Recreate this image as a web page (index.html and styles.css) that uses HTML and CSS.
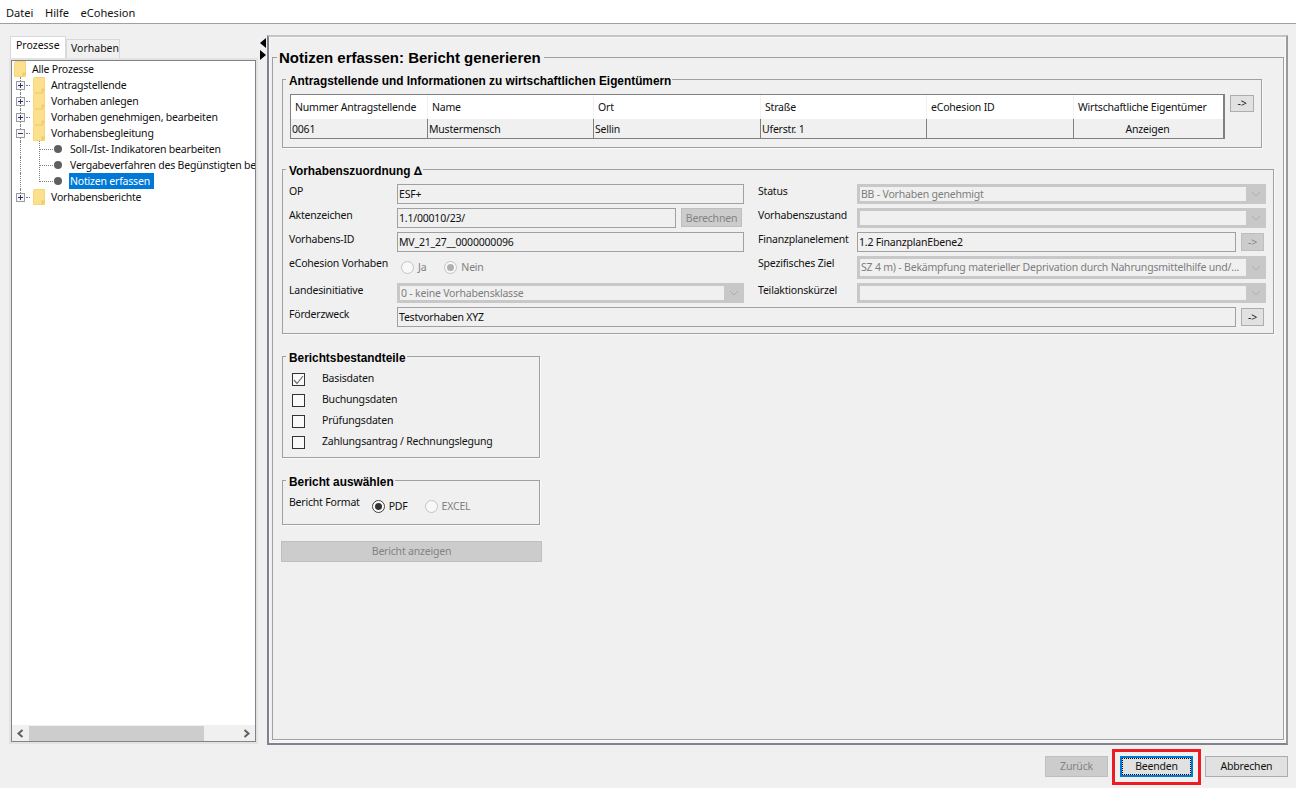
FILE: index.html
```html
<!DOCTYPE html>
<html lang="de">
  <head>
    <meta charset="UTF-8" />
    <title>eCohesion</title>
    <link rel="stylesheet" href="styles.css">
  </head>
  <body>
    <svg class="defs" width="0" height="0">
      <symbol id="folder" viewBox="0 0 12 16">
        <path d="M0.500 1.500Q0.500 0.500 1.500 0.500H11.500V15.500H0.500Z" fill="#fce08e" stroke="#f7d678"/>
        <path d="M11.500 11.500V13.500L9 15.500H8.500V11.500Z" fill="#f3cb62"/>
      </symbol>
      <symbol id="chev" viewBox="0 0 10 6">
        <path d="M1 1L5 5L9 1" fill="none" stroke="#aeaeae"/>
      </symbol>
    </svg>

    <nav class="menubar">
      <span>Datei</span>
      <span>Hilfe</span>
      <span>eCohesion</span>
    </nav>

    <div class="workspace">
      <!-- linke Seite: Baum -->
      <aside class="side">
        <div class="tabs">
          <span class="tab active">Prozesse</span>
          <span class="tab">Vorhaben</span>
        </div>
        <div class="tree-box">
          <ul class="tree">
            <li class="root"><svg class="folder"><use href="#folder"/></svg>Alle Prozesse</li>
            <li class="lvl1"><i class="toggle plus"></i><svg class="folder"><use href="#folder"/></svg>Antragstellende</li>
            <li class="lvl1"><i class="toggle plus"></i><svg class="folder"><use href="#folder"/></svg>Vorhaben anlegen</li>
            <li class="lvl1"><i class="toggle plus"></i><svg class="folder"><use href="#folder"/></svg>Vorhaben genehmigen, bearbeiten</li>
            <li class="lvl1"><i class="toggle"></i><svg class="folder"><use href="#folder"/></svg>Vorhabensbegleitung</li>
            <li class="lvl2"><b class="dot"></b><span>Soll-/Ist- Indikatoren bearbeiten</span></li>
            <li class="lvl2"><b class="dot"></b><span>Vergabeverfahren des Begünstigten bearbeiten</span></li>
            <li class="lvl2"><b class="dot"></b><span class="selected">Notizen erfassen</span></li>
            <li class="lvl1 last"><i class="toggle plus"></i><svg class="folder"><use href="#folder"/></svg>Vorhabensberichte</li>
          </ul>
          <div class="hscroll">
            <svg width="9" height="9" viewBox="0 0 9 9"><path d="M6.500 1L2.500 4.500L6.500 8" fill="none" stroke="#606060" stroke-width="2"/></svg>
            <div class="hscroll-track"><div class="hscroll-thumb"></div></div>
            <svg width="9" height="9" viewBox="0 0 9 9"><path d="M2.500 1L6.500 4.500L2.500 8" fill="none" stroke="#606060" stroke-width="2"/></svg>
          </div>
        </div>
      </aside>

      <div class="splitter">
        <span class="arrow-left"></span>
        <span class="arrow-right"></span>
      </div>

      <!-- rechte Seite: Formular -->
      <main class="main">
        <fieldset class="group page">
          <legend class="title">Notizen erfassen: Bericht generieren</legend>

          <fieldset class="group owners">
            <legend>Antragstellende und Informationen zu wirtschaftlichen Eigentümern</legend>
            <div class="owners-row">
              <table class="grid">
                <colgroup>
                  <col class="c1"><col class="c2"><col class="c3"><col class="c4"><col class="c5"><col class="c6">
                </colgroup>
                <thead>
                  <tr><th>Nummer Antragstellende</th><th>Name</th><th>Ort</th><th>Straße</th><th>eCohesion ID</th><th>Wirtschaftliche Eigentümer</th></tr>
                </thead>
                <tbody>
                  <tr><td>0061</td><td>Mustermensch</td><td>Sellin</td><td>Uferstr. 1</td><td></td><td class="center">Anzeigen</td></tr>
                </tbody>
              </table>
              <button class="btn arrow">-&gt;</button>
            </div>
          </fieldset>

          <fieldset class="group assign">
            <legend>Vorhabenszuordnung <span class="delta">∆</span></legend>
            <div class="assign-grid">
              <label>OP</label>
              <div class="field">ESF+</div>
              <label>Status</label>
              <div class="combo"><span>BB - Vorhaben genehmigt</span><svg><use href="#chev"/></svg></div>

              <label>Aktenzeichen</label>
              <div class="with-btn"><div class="field">1.1/00010/23/</div><button class="btn off calc">Berechnen</button></div>
              <label>Vorhabenszustand</label>
              <div class="combo"><span></span><svg><use href="#chev"/></svg></div>

              <label>Vorhabens-ID</label>
              <div class="field">MV_21_27__0000000096</div>
              <label>Finanzplanelement</label>
              <div class="with-btn"><div class="field">1.2 FinanzplanEbene2</div><button class="btn off arrow">-&gt;</button></div>

              <label>eCohesion Vorhaben</label>
              <div class="radios muted">
                <span class="radio"><i class="circle"></i>Ja</span>
                <span class="radio"><i class="circle on"></i>Nein</span>
              </div>
              <label>Spezifisches Ziel</label>
              <div class="combo tall"><span>SZ 4 m) - Bekämpfung materieller Deprivation durch Nahrungsmittelhilfe und/...</span><svg><use href="#chev"/></svg></div>

              <label>Landesinitiative</label>
              <div class="combo"><span>0 - keine Vorhabensklasse</span><svg><use href="#chev"/></svg></div>
              <label>Teilaktionskürzel</label>
              <div class="combo"><span></span><svg><use href="#chev"/></svg></div>

              <label>Förderzweck</label>
              <div class="with-btn wide"><div class="field">Testvorhaben XYZ</div><button class="btn arrow">-&gt;</button></div>
            </div>
          </fieldset>

          <fieldset class="group parts">
            <legend>Berichtsbestandteile</legend>
            <div class="check-row"><i class="box"><svg width="11" height="10" viewBox="0 0 11 10"><path d="M1 5L4 8.500L10 1" fill="none" stroke="#707070" stroke-width="1.200"/></svg></i><span>Basisdaten</span></div>
            <div class="check-row"><i class="box"></i><span>Buchungsdaten</span></div>
            <div class="check-row"><i class="box"></i><span>Prüfungsdaten</span></div>
            <div class="check-row"><i class="box"></i><span>Zahlungsantrag / Rechnungslegung</span></div>
          </fieldset>

          <fieldset class="group report">
            <legend>Bericht auswählen</legend>
            <div class="report-row">
              <label>Bericht Format</label>
              <span class="radio strong"><i class="circle on dark"></i>PDF</span>
              <span class="radio muted"><i class="circle"></i>EXCEL</span>
            </div>
          </fieldset>

          <button class="btn off show">Bericht anzeigen</button>
        </fieldset>
      </main>
    </div>

    <footer class="actions">
      <button class="btn off foot back">Zurück</button>
      <div class="mark"><button class="btn foot focus"><span>Beenden</span></button></div>
      <button class="btn foot cancel">Abbrechen</button>
    </footer>
  </body>
</html>
```

FILE: styles.css
```css
* {
  margin: 0;
  padding: 0;
  box-sizing: border-box;
}

html,
body {
  width: 1296px;
  height: 788px;
  overflow: hidden;
}

body {
  background: #f0f0f0;
  color: #111;
  font-family: "Noto Sans", sans-serif;
  font-size: 10.500px;
  letter-spacing: -0.200px;
  display: flex;
  flex-direction: column;
}

ul {
  list-style: none;
}

button {
  font-family: inherit;
  font-size: inherit;
  letter-spacing: inherit;
  color: inherit;
}

.defs {
  display: block;
  height: 0;
}

/* menu */
.menubar {
  height: 24px;
  flex: none;
  background: #fff;
  border-bottom: 1px solid #a0a0a0;
  display: flex;
  align-items: center;
  gap: 11.500px;
  padding: 1px 0 0 6px;
  font-size: 11.100px;
  letter-spacing: 0;
}

.workspace {
  height: 725px;
  flex: none;
  display: flex;
}

/* tree */
.side {
  width: 258px;
  flex: none;
  padding: 12px 0 0 10px;
  display: flex;
  flex-direction: column;
}

.tabs {
  display: flex;
  height: 24px;
  align-items: flex-end;
  font-size: 10.500px;
  letter-spacing: 0;
}

.tab {
  width: 54px;
  height: 21px;
  padding: 1px 0 0 4px;
  background: #f0f0f0;
  border: 1px solid #d9d9d9;
  border-bottom: 0;
}

.tab.active {
  width: 56px;
  height: 24px;
  background: #fff;
  padding: 1px 0 0 5px;
}

.tree-box {
  height: 682px;
  margin: 0 2px 0 1px;
  background: #fff;
  border: 1px solid #82828c;
  box-shadow: 0 0 0 2px #e3e3e3;
  display: flex;
  flex-direction: column;
  overflow: hidden;
}

.tree {
  flex: 1;
  overflow: hidden;
}

.tree li {
  height: 16px;
  display: flex;
  align-items: center;
  white-space: nowrap;
  position: relative;
}

.root {
  padding-left: 2px;
}

.lvl1 {
  padding-left: 4px;
}

.lvl2 {
  padding-left: 42px;
}

.lvl2 span {
  padding-left: 1px;
}

/* connector lines of the tree */
.lvl1::before,
.lvl2::before {
  content: "";
  position: absolute;
  left: 8px;
  top: 0;
  height: 16px;
  border-left: 1px dotted #808080;
}

.lvl1.last::before {
  height: 8px;
}

.lvl2::after {
  content: "";
  position: absolute;
  left: 27px;
  top: -8px;
  width: 13px;
  height: 16px;
  border-left: 1px dotted #808080;
  border-bottom: 1px dotted #808080;
}

.lvl1 + .lvl2::after {
  top: 0;
  height: 8px;
}

.toggle::after {
  content: "";
  position: absolute;
  left: 14px;
  top: 8px;
  width: 4px;
  border-top: 1px dotted #808080;
}

.folder {
  width: 12px;
  height: 16px;
  margin-right: 6px;
  flex: none;
}

.toggle {
  width: 9px;
  height: 9px;
  border: 1px solid #9a9a9a;
  background: linear-gradient(#25356a, #25356a) center / 5px 1px no-repeat, #f4f6fa;
  margin-right: 8px;
  flex: none;
  z-index: 1;
}

.toggle.plus {
  background: linear-gradient(#25356a, #25356a) center / 5px 1px no-repeat,
    linear-gradient(#25356a, #25356a) center / 1px 5px no-repeat, #f4f6fa;
}

.dot {
  width: 8px;
  height: 8px;
  border-radius: 50%;
  background: #5f5f5f;
  margin-right: 7px;
  flex: none;
}

.selected {
  background: #0078d7;
  color: #fff;
  height: 16px;
  line-height: 16px;
  width: 85px;
}

.hscroll {
  height: 16px;
  flex: none;
  background: #f0f0f0;
  display: flex;
  align-items: center;
  padding: 0 4px;
  gap: 3px;
}

.hscroll-track {
  flex: 1;
  height: 15px;
}

.hscroll-thumb {
  width: 175px;
  height: 15px;
  margin-left: 1px;
  background: #cdcdcd;
}

/* splitter */
.splitter {
  width: 9px;
  flex: none;
  padding: 14px 0 0 2px;
  display: flex;
  flex-direction: column;
  gap: 2px;
}

.arrow-left {
  width: 0;
  height: 0;
  border: 5px solid transparent;
  border-left: 0;
  border-right: 6px solid #000;
}

.arrow-right {
  width: 0;
  height: 0;
  border: 5px solid transparent;
  border-right: 0;
  border-left: 6px solid #000;
}

/* form */
.main {
  width: 1021px;
  height: 710px;
  flex: none;
  margin-top: 11px;
  background: #f0f0f0;
  border-style: solid;
  border-width: 2px;
  border-color: #c4c4c4 #9a9a9a #82828c #82828c;
  box-shadow: inset 0 0 0 1px #f8f8f8;
  padding: 11px 0 0 3px;
}

.group {
  border: 1px solid #a0a0a0;
  box-shadow: 1px 1px 0 #fafafa;
  min-width: 0;
}

.group > legend {
  font-family: "Liberation Sans", sans-serif;
  font-weight: bold;
  font-size: 11.850px;
  letter-spacing: 0;
  color: #000;
  padding: 3px 1px 0 3px;
  line-height: 14px;
}

.delta {
  font-family: "DejaVu Sans", sans-serif;
  font-size: 12px;
  line-height: 10px;
}

.page {
  width: 1012px;
  height: 692px;
  padding: 0 0 0 9px;
}

.page > legend.title {
  font-size: 15px;
  line-height: 18px;
  margin-left: -5px;
  padding: 1px 3px 0 2px;
}

.owners {
  width: 980px;
  height: 77px;
  margin-top: 4px;
  padding: 6px 0 0 7px;
}

.owners > legend {
  margin-left: -4px;
}

.owners-row {
  display: flex;
  align-items: flex-start;
  gap: 5px;
}

.grid {
  width: 935px;
  flex: none;
  border-collapse: separate;
  border-spacing: 0;
  table-layout: fixed;
  border: 1px solid #808080;
  border-width: 1px 2px 1px 1px;
}

.c1 { width: 136px; }
.c2 { width: 166px; }
.c3 { width: 167px; }
.c4 { width: 166px; }
.c5 { width: 147px; }

.grid th {
  height: 24px;
  background: #fff;
  font-weight: normal;
  text-align: left;
  padding-left: 4px;
  border-left: 1px solid #f0f0f0;
}

.grid th:first-child {
  border-left: 0;
}

.grid td {
  height: 19px;
  padding-left: 1px;
  border-left: 1px solid #808080;
}

.grid td:first-child {
  border-left: 0;
}

.grid .center {
  text-align: center;
  padding: 0 2px 0 0;
}

.btn {
  background: #e1e1e1;
  border: 1px solid #adadad;
}

.btn.off {
  background: #cccccc;
  border-color: #bfbfbf;
  color: #838383;
}

.arrow {
  width: 24px;
  height: 17px;
  flex: none;
  line-height: 13px;
  margin-top: 1px;
}

.assign {
  width: 992px;
  height: 173px;
  margin-top: 13px;
  padding: 6px 0 0 6px;
}

.assign > legend,
.report > legend {
  margin-left: -3px;
}

.assign-grid {
  display: grid;
  grid-template-columns: 108px 347px 113px 409px;
  grid-template-rows: 24px 24px 24px 27px 24px 24px;
}

.assign-grid label {
  line-height: 14px;
  white-space: nowrap;
}

.assign-grid > label:nth-of-type(2n) {
  padding-left: 14px;
}

.field {
  height: 20px;
  flex: 1;
  min-width: 0;
  background: #f0f0f0;
  border: 1px solid #a0a0a0;
  padding-left: 1px;
  line-height: 18px;
  white-space: nowrap;
}

.with-btn {
  display: flex;
  gap: 5px;
  height: 20px;
}

.with-btn .btn {
  margin-right: 2px;
}

.with-btn .arrow {
  height: 18px;
  width: 23px;
}

.wide {
  grid-column: 2 / 5;
}

.calc {
  width: 61px;
  height: 19px;
  flex: none;
  line-height: 14px;
}

.combo {
  height: 20px;
  background: #c8c8c8;
  color: #7d7d7d;
  display: flex;
  align-items: center;
  padding: 3px 0 3px 3px;
  white-space: nowrap;
}

.combo.tall {
  height: 23px;
}

.combo span {
  flex: 1;
  min-width: 0;
  height: 100%;
  padding-left: 1px;
  background: #f0f0f0;
  line-height: 14px;
  overflow: hidden;
}

.combo.tall span {
  line-height: 17px;
}

.combo svg {
  flex: none;
  width: 10px;
  height: 6px;
  margin: 0 5px;
}

.radios {
  display: flex;
  gap: 18px;
  padding: 2px 0 0 4px;
}

.radio {
  display: inline-flex;
  align-items: center;
  gap: 4px;
  height: 18px;
}

.muted {
  color: #808080;
}

.circle {
  width: 13px;
  height: 13px;
  border: 1px solid #c4c4c4;
  border-radius: 50%;
  background: #f8f8f8;
  position: relative;
  flex: none;
}

.circle.on::after {
  content: "";
  position: absolute;
  left: 2px;
  top: 2px;
  width: 7px;
  height: 7px;
  border-radius: 50%;
  background: #b0b0b0;
}

.circle.dark {
  border-color: #404040;
  background: #fff;
}

.circle.dark::after {
  background: #333;
}

.parts {
  width: 258px;
  height: 110px;
  margin-top: 14px;
  padding: 6px 0 0 9px;
}

.parts > legend {
  margin-left: -6px;
}

.check-row {
  display: flex;
  height: 21px;
  gap: 17px;
  align-items: flex-start;
}

.check-row span {
  line-height: 14px;
}

.box {
  width: 13px;
  height: 13px;
  margin-top: 2px;
  border: 1px solid #333;
  background: #fafafa;
  display: flex;
  align-items: center;
  justify-content: center;
  flex: none;
}

.report {
  width: 258px;
  height: 53px;
  margin-top: 14px;
  padding: 6px 0 0 6px;
}

.report-row {
  display: flex;
  align-items: flex-start;
  gap: 12px;
}

.report-row label {
  line-height: 14px;
}

.report-row .radio {
  margin-top: 2px;
}

.strong {
  margin-right: 5px;
}

.show {
  display: block;
  width: 261px;
  height: 21px;
  margin-top: 16px;
  margin-left: -1px;
  padding-bottom: 2px;
}

/* bottom */
.actions {
  flex: 1;
  display: flex;
  align-items: flex-start;
  justify-content: flex-end;
  gap: 4px;
  padding: 7px 8px 0 0;
}

.foot {
  height: 21px;
  padding-bottom: 2px;
}

.back {
  width: 63px;
}

.cancel {
  width: 83px;
}

.mark {
  width: 89px;
  height: 36px;
  margin-top: -7px;
  padding: 4px 5px;
  border: 3px solid #ed1c24;
}

.focus {
  display: block;
  width: 73px;
  height: 21px;
  border: 2px solid #0078d7;
  padding: 0;
}

.focus span {
  display: block;
  line-height: 15px;
  border: 1px dotted #000;
}
```
